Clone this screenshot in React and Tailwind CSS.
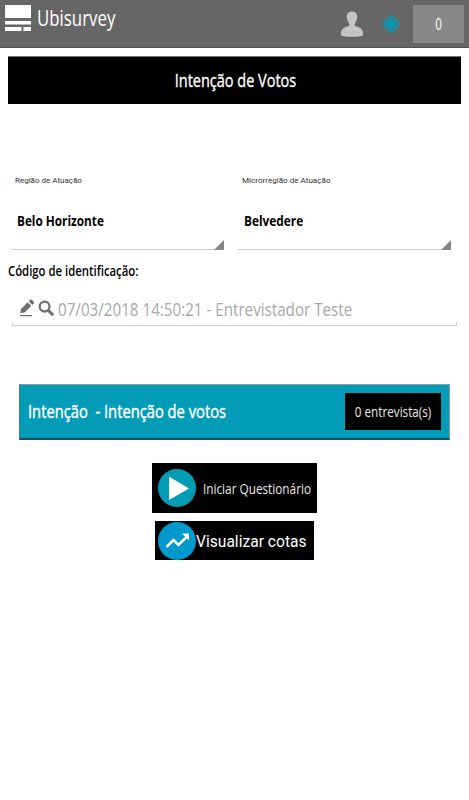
import React from 'react';

function T({ className, children }) {
  return <span className={`inline-block whitespace-pre shrink-0 ${className}`}>{children}</span>;
}

function Picker({ label, labelClass, value, valueClass }) {
  return (
    <div className="h-[77px] w-[213px] flex flex-col">
      <div className="h-4 pl-[4px] flex items-center font-[Roboto,sans-serif] text-[8px] text-[#333]">
        <T className={labelClass}>{label}</T>
      </div>
      <div className="flex-1 border-b border-[#d0d0d0] flex items-center justify-between">
        <T className={`ml-[6px] mt-[2px] text-[15px] font-bold text-black ${valueClass}`}>{value}</T>
        <svg className="self-end w-[10px] h-[10px] -mb-px shrink-0 -ml-40" viewBox="0 0 10 10">
          <path d="M10 0V10H0Z" fill="#858585" />
        </svg>
      </div>
    </div>
  );
}

export default function App() {
  return (
    <div className="w-[469px] h-[800px] bg-white overflow-hidden flex flex-col font-['Open_Sans','Noto_Sans',sans-serif]">
      <header className="h-[48px] shrink-0 bg-[#666] border-b border-[#505050] flex items-start">
        <svg className="w-[26px] h-[26px] mt-[5px] ml-[5px] shrink-0" viewBox="0 0 26 26" fill="#fff">
          <path d="M0 0H26V13H0ZM0 16H26V19.5H0ZM0 22H16.5V26H0ZM18.5 22H26V26H18.5Z" />
        </svg>
        <div className="ml-[6px] h-[34px] w-[303px] flex items-center">
          <T className="text-[22px] text-white origin-left scale-x-[0.765]">Ubisurvey</T>
        </div>
        <svg className="w-[24px] h-[26px] mt-[11px] shrink-0" viewBox="0 0 24 26" fill="#c4c4c4">
          <path d="M12 0.5C15.5 0.5 17.4 2.5 17.2 6C17 9 16.3 10.5 15 12.2C14.3 13.8 14.8 15 16.6 15.6C20.5 17 23 18.2 23 22.5V24.2C19 26.2 5 26.2 1 24.2V22.5C1 18.2 3.5 17 7.4 15.6C9.2 15 9.7 13.8 9 12.2C7.7 10.5 7 9 6.8 6C6.6 2.5 8.5 0.5 12 0.5Z" />
        </svg>
        <svg className="w-[20px] h-[20px] mt-[14px] ml-[17px] shrink-0" viewBox="0 0 20 20">
          <g fill="none" stroke="#039ab6">
            <circle cx="10" cy="10" r="6.6" strokeWidth="1.6" />
            <path d="M10 .8V4M10 16V19.2M.8 10H4M16 10H19.2" strokeWidth="2" />
          </g>
          <circle cx="10" cy="10" r="4.6" fill="#039ab6" />
        </svg>
        <div className="ml-[12px] mt-[5px] w-[51px] h-[38px] bg-[#888] flex items-center justify-center">
          <T className="text-[16px] text-white scale-x-[0.72]">0</T>
        </div>
      </header>

      <div className="mt-[8px] ml-[8px] h-[48px] w-[453px] shrink-0 bg-black border-t border-[#777] flex items-center justify-center">
        <T className="text-[18px] text-white [-webkit-text-stroke:0.35px_white] scale-x-[0.805] ml-[2px]">Intenção de Votos</T>
      </div>

      <div className="mt-[69px] ml-[11px] flex gap-[14px] shrink-0">
        <Picker label="Região de Atuação" labelClass="origin-left" value="Belo Horizonte" valueClass="origin-left scale-x-[0.785]" />
        <Picker label="Microrregião de Atuação" labelClass="origin-left scale-x-[1.01]" value="Belvedere" valueClass="origin-left scale-x-[0.79]" />
      </div>

      <div className="mt-[9px] ml-[8px] h-[22px] shrink-0 flex items-center">
        <T className="text-[14px] font-semibold text-black origin-left scale-x-[0.81]">Código de identificação:</T>
      </div>

      <div className="mt-[16px] ml-[12px] w-[445px] h-[29px] shrink-0 flex flex-col">
        <div className="h-[25px] flex items-center">
          <svg className="ml-[7px] w-[17px] h-[18px] shrink-0 mb-[3px]" viewBox="0 0 17 18" fill="#707070">
            <path d="M2 10L8.7 3.3L12.3 6.9L5.6 13.6L1.2 14ZM9.7 2.3L11.2 .8Q12 0 12.8 .8L14.8 2.8Q15.6 3.6 14.8 4.4L13.3 5.9ZM1 16H13V17.3H1Z" />
          </svg>
          <svg className="ml-[2px] w-[17px] h-[17px] shrink-0 mb-[2px]" viewBox="0 0 17 17" fill="none" stroke="#707070">
            <circle cx="6.6" cy="6.6" r="4.9" strokeWidth="2.3" />
            <path d="M10.2 10.2L15.2 15.2" strokeWidth="3" />
          </svg>
          <T className="ml-[3px] text-[18px] text-[#a8a8a8] origin-left scale-x-[0.843]">07/03/2018 14:50:21 - Entrevistador Teste</T>
        </div>
        <div className="h-[4px] border-b border-x border-[#d0d0d0]" />
      </div>

      <div className="mt-[58px] ml-[19px] w-[431px] h-[56px] shrink-0 bg-[#039cb8] border border-t-[#8a9a9e] border-l-[#407f8c] border-r-[#8a9a9e] border-b-2 border-b-[#135463] flex items-center justify-between pl-[8px] pr-[8px]">
        <T className="text-[18px] text-white [-webkit-text-stroke:0.4px_white] origin-left scale-x-[0.818] w-[260px]">{'Intenção  - Intenção de votos'}</T>
        <div className="w-[96px] h-[37px] bg-black flex items-center justify-center">
          <T className="text-[15px] text-[#e8e8e8] scale-x-[0.78]">0 entrevista(s)</T>
        </div>
      </div>

      <div className="mt-[23px] ml-[152px] w-[165px] h-[50px] shrink-0 bg-black flex items-center">
        <svg className="ml-[6px] w-[38px] h-[38px] shrink-0" viewBox="0 0 38 38">
          <circle cx="19" cy="19" r="19" fill="#039cb5" />
          <path d="M11 7.5L31 19.5L11 31Z" fill="#fff" />
        </svg>
        <T className="ml-[7px] text-[15px] text-[#e8e8e8] origin-left scale-x-[0.785]">Iniciar Questionário</T>
      </div>

      <div className="mt-[8px] ml-[155px] w-[159px] h-[39px] shrink-0 bg-black flex items-center font-[Roboto,sans-serif]">
        <svg className="ml-[3px] w-[38px] h-[38px] shrink-0" viewBox="0 0 38 38">
          <circle cx="19" cy="19" r="19" fill="#0099cc" />
          <path d="M8.5 25L15.5 18L20.5 23L29 14.5" fill="none" stroke="#fff" strokeWidth="2.5" />
          <path d="M24 11.5H31V18.5Z" fill="#fff" />
        </svg>
        <T className="mt-[3px] text-[16px] text-white origin-left scale-x-[0.975]">Visualizar cotas</T>
      </div>
    </div>
  );
}
